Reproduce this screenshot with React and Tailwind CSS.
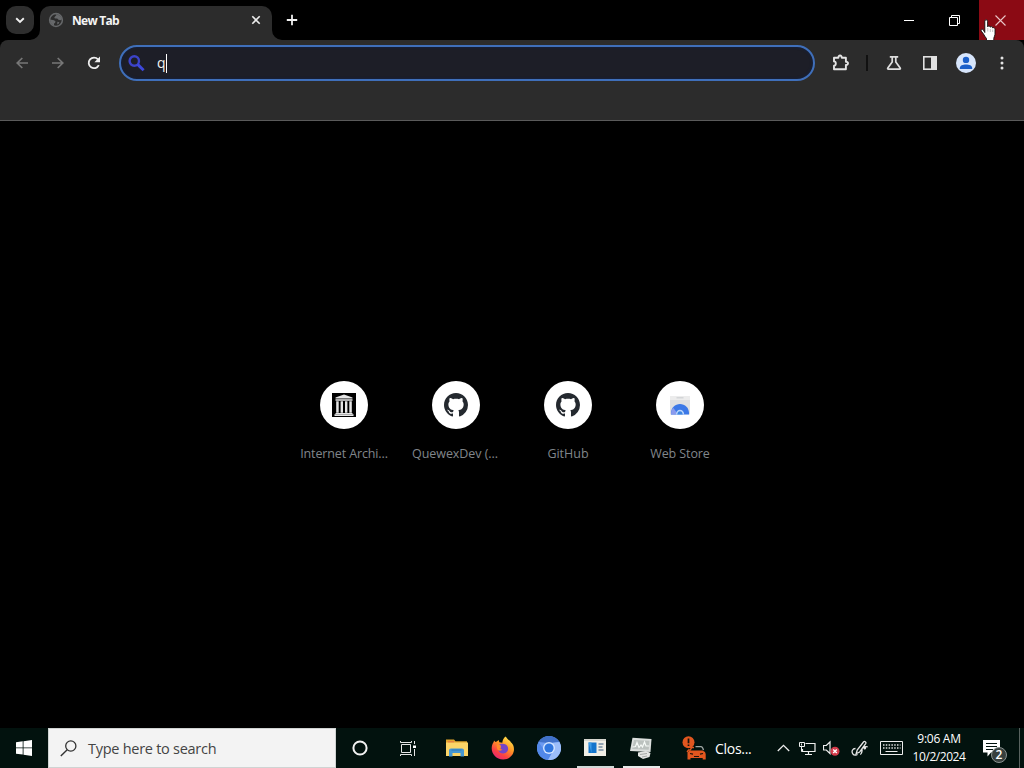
import React from 'react';

const Svg = ({ w, h, className = '', children, box }) => (
  <svg width={w} height={h} viewBox={box || `0 0 ${w} ${h}`} fill="none" className={`block shrink-0 ${className}`}>
    {children}
  </svg>
);

const Cell = ({ className = '', children }) => (
  <div className={`flex shrink-0 items-center justify-center ${className}`}>{children}</div>
);

const GlobeIcon = () => (
  <Svg w={16} h={16}>
    <circle cx="8" cy="8" r="6.4" stroke="#66686a" strokeWidth="1.500" />
    <path d="M2 7.600l4 .6 1.600 1.400-.6 1.400-1 .6v2C3.800 13 2 10.800 2 7.600zM7 2.200l1.500.8-1.500 1.400-.8 1.600 1.400.6 1.600-.2 1.200 1.400 2 .4 1.700-1C13.600 4.500 10.800 2 7 2.200zM9.400 9.800l2 .4-.8 1.600-1.400.6z" fill="#66686a" />
  </Svg>
);

function TabStrip() {
  return (
    <div className="flex h-10 items-stretch overflow-hidden bg-black">
      <div className="flex w-10 items-center pl-[6px]">
        <div className="flex h-7 w-7 items-center justify-center rounded-[10px] bg-[#2e2e2e]">
          <Svg w={10} h={7}><path d="M1.200 1.300L5 5l3.800-3.700" stroke="#f0f0f0" strokeWidth="1.900" /></Svg>
        </div>
      </div>
      <div className="relative mt-[6px] flex w-[232px] items-center rounded-t-[10px] bg-[#2c2c2c] pb-[6px] pl-2 pr-[11px]">
        <Svg w={10} h={10} className="absolute -left-[10px] bottom-0"><path d="M10 0v10H0A10 10 0 0 0 10 0z" fill="#2c2c2c" /></Svg>
        <Svg w={10} h={10} className="absolute -right-[10px] bottom-0"><path d="M0 0v10h10A10 10 0 0 1 0 0z" fill="#2c2c2c" /></Svg>
        <GlobeIcon />
        <span className="ml-2 flex-1 pt-px text-[12px] font-bold leading-4 tracking-[-0.720px] text-[#f4f4f4]">New Tab</span>
        <Svg w={10} h={10}><path d="M1.300 1.300l7.400 7.400M8.700 1.300L1.300 8.700" stroke="#ececec" strokeWidth="1.600" /></Svg>
      </div>
      <Cell className="w-10">
        <Svg w={12} h={12}><path d="M6 .8v10.400M.8 6h10.400" stroke="#f0f0f0" strokeWidth="1.800" /></Svg>
      </Cell>
      <div className="flex-1" />
      <Cell className="w-[46px]"><Svg w={10} h={10}><path d="M0 5.500h10" stroke="#fff" /></Svg></Cell>
      <Cell className="w-[47px] pr-[2px]">
        <Svg w={11} h={11}><path d="M.5 2.500h8v8h-8zM2.500 2.500v-2h8v8h-2" stroke="#fff" /></Svg>
      </Cell>
      <div className="relative flex w-[45px] items-center justify-center bg-[#8b0a14] pr-[2px]">
        <Svg w={11} h={11}><path d="M.5.5l10 10M10.500.5l-10 10" stroke="#e9c6c8" strokeWidth="1.100" /></Svg>
        <Svg w={17} h={22} className="absolute left-[1px] top-[19px]">
          <path d="M4.800 13.500V2.200C4.800.3 7.600.3 7.600 2.200v5.600c.5-1.300 2.500-1 2.600.4.700-1 2.400-.7 2.500.7.900-.7 2.300 0 2.300 1.400v5c0 1.700-1.200 2.600-1.200 4V23H6.500v-3.500c-1.200-1.300-2.200-3-3-4.500L1.200 12c-.8-1.500 1-2.400 2.100-1.200z" fill="#fff" stroke="#111" strokeWidth=".9" />
          <path d="M7.800 9v3.500M10.300 10v3M12.700 10.500V13" stroke="#999" strokeWidth=".6" />
        </Svg>
      </div>
    </div>
  );
}

function Toolbar() {
  return (
    <div className="bg-black">
      <div className="h-[81px] rounded-t-[8px] border-b border-[#5a5a5a] bg-[#2c2c2c]">
        <div className="flex h-[46px] items-center pl-1">
          <Cell className="w-9">
            <Svg w={12} h={12}><path d="M12 6H1.500M6.300 1L1.200 6l5.100 5" stroke="#777" strokeWidth="1.700" /></Svg>
          </Cell>
          <Cell className="w-9">
            <Svg w={12} h={12}><path d="M0 6h10.500M5.700 1l5.100 5-5.100 5" stroke="#777" strokeWidth="1.700" /></Svg>
          </Cell>
          <Cell className="w-9">
            <Svg w={14} h={14}><path d="M11.800 9.200A5.300 5.300 0 1 1 11 3.400" stroke="#eee" strokeWidth="1.800" /><path d="M13 .6v5.600H7.400z" fill="#eee" /></Svg>
          </Cell>
          <div className="ml-[7px] flex h-9 w-[696px] shrink-0 items-center rounded-full border-2 border-[#3f6fba] bg-[#1d1e27] pl-[7px] shadow-[inset_0_0_3px_#10224c]">
            <Svg w={17} h={17}>
              <circle cx="6.300" cy="6" r="4.700" stroke="#3c43c8" strokeWidth="2.400" />
              <path d="M9.600 9.400l6 5.800" stroke="#3d48dc" strokeWidth="2.900" />
            </Svg>
            <span className="ml-[12px] text-[14px] leading-5 text-[#f2f2f2]">q</span>
            <span className="h-[19px] w-px bg-white" />
          </div>
          <Cell className="ml-[7px] w-9">
            <Svg w={18} h={18} className="ml-px">
              <path d="M2 3.700h4.400c-.3-3 3.600-3 3.300 0h4.200v4c2.800-.1 2.800 3.300 0 3.200v4.400H2v-3.600c2.400 0 2.400-4.300 0-4.300z" stroke="#e4e4e4" strokeWidth="1.900" strokeLinejoin="round" />
            </Svg>
          </Cell>
          <Cell className="ml-[8px] w-[2px]"><div className="h-4 w-[2px] bg-[#111]" /></Cell>
          <Cell className="ml-2 w-9">
            <Svg w={16} h={16}><path d="M3.800 1.800h8.400M6.200 2v5L1.800 13.100c-.4.600-.1 1.100.6 1.100h11.200c.7 0 1-.5.6-1.100L9.800 7V2" stroke="#dedede" strokeWidth="1.700" /></Svg>
          </Cell>
          <Cell className="w-9">
            <Svg w={14} h={14}><rect x=".8" y=".8" width="12.400" height="12.400" stroke="#e2e2e2" strokeWidth="1.600" /><path d="M8 0h6v14H8z" fill="#e2e2e2" /></Svg>
          </Cell>
          <Cell className="w-9">
            <Svg w={20} h={20}><circle cx="10" cy="10" r="10" fill="#d7e5fb" /><circle cx="10" cy="6.900" r="3.200" fill="#1b5fc9" /><path d="M3.800 14.900c0-4.600 12.400-4.600 12.400 0v1H3.800z" fill="#1b5fc9" /></Svg>
          </Cell>
          <Cell className="w-9">
            <Svg w={4} h={14}><circle cx="2" cy="2" r="1.500" fill="#e4e4e4" /><circle cx="2" cy="7" r="1.500" fill="#e4e4e4" /><circle cx="2" cy="12" r="1.500" fill="#e4e4e4" /></Svg>
          </Cell>
        </div>
      </div>
    </div>
  );
}

const ArchiveLogo = () => (
  <Svg w={24} h={24}>
    <path d="M0 0h24v24H0z" fill="#000" />
    <path d="M12 1.500l8.500 3v1H3.500v-1zM3.500 6.200h17v1.500h-17zM4.200 8.300h2.500v11.400H4.200zM8.600 8.300h2.400v11.400H8.600zM13 8.300h2.400v11.400H13zM17.300 8.300h2.500v11.400h-2.500zM3.500 19.900h17V21h-17zM2.500 21.300h19V23h-19z" fill="#e6e6e6" />
  </Svg>
);

const GitHubLogo = () => (
  <Svg w={24} h={24} box="0 0 16 16">
    <path fill="#24292f" d="M8 0C3.580 0 0 3.580 0 8c0 3.540 2.290 6.530 5.470 7.590.4.070.55-.17.55-.38 0-.19-.01-.82-.01-1.490-2.010.37-2.530-.49-2.690-.94-.09-.23-.48-.94-.82-1.130-.28-.15-.68-.52-.01-.53.63-.01 1.080.58 1.230.82.72 1.210 1.870.87 2.330.66.07-.52.28-.87.51-1.070-1.780-.2-3.640-.89-3.640-3.950 0-.87.31-1.590.82-2.150-.08-.2-.36-1.020.08-2.120 0 0 .67-.21 2.200.82.64-.18 1.320-.27 2-.27s1.360.09 2 .27c1.530-1.040 2.200-.82 2.200-.82.44 1.100.16 1.920.08 2.120.51.56.82 1.270.82 2.150 0 3.070-1.870 3.750-3.650 3.950.29.25.54.73.54 1.480 0 1.070-.01 1.930-.01 2.200 0 .21.15.46.55.38A8.010 8.010 0 0 0 16 8c0-4.420-3.580-8-8-8z" />
  </Svg>
);

const WebStoreLogo = () => (
  <Svg w={22} h={22}>
    <path d="M1 2h20v18.500H1z" fill="#dfe0e2" />
    <path d="M1 2h20v4H1z" fill="#ececec" />
    <path d="M7.500 3.800h7" stroke="#cfd1d4" strokeWidth="1.200" />
    <path d="M2 20.500C1 6.500 21 6.500 20 20.500z" fill="#3b78e7" />
    <path d="M2 20.500c0-3 .8-5.300 2.200-6.800L7 17.500v3z" fill="#8b9bee" />
    <path d="M6.800 20.500c0-6.500 8.400-6.500 8.400 0z" fill="#b9d4fb" />
    <path d="M8.300 20.500c0-4.500 5.400-4.500 5.400 0z" fill="#3c86e2" />
  </Svg>
);

const SHORTCUTS = [
  { label: 'Internet Archi...', logo: <ArchiveLogo />, track: 'tracking-[-0.130px]' },
  { label: 'QuewexDev (...', logo: <GitHubLogo />, track: 'tracking-[-0.060px] pr-[2px]' },
  { label: 'GitHub', logo: <GitHubLogo />, track: 'tracking-[0px]' },
  { label: 'Web Store', logo: <WebStoreLogo />, track: 'tracking-[-0.100px]' },
];

function NewTabPage() {
  return (
    <main className="flex flex-1 justify-center bg-black pt-[260px]">
      {SHORTCUTS.map((s) => (
        <div key={s.label} className="flex w-28 flex-col items-center">
          <div className="flex h-12 w-12 items-center justify-center rounded-full bg-white">{s.logo}</div>
          <span className={`mt-4 whitespace-nowrap text-[12.500px] leading-[18px] text-[#80868b] ${s.track}`}>{s.label}</span>
        </div>
      ))}
    </main>
  );
}

const FirefoxLogo = () => (
  <Svg w={24} h={24}>
    <defs>
      <linearGradient id="ff" x1="18" y1="2" x2="5" y2="22" gradientUnits="userSpaceOnUse">
        <stop offset="0" stopColor="#ffe04a" /><stop offset=".4" stopColor="#ff9425" /><stop offset=".75" stopColor="#fb4044" /><stop offset="1" stopColor="#e82873" />
      </linearGradient>
    </defs>
    <path d="M14.500.5c1 1 2 2.700 4.500 4.500.3.300.6.800.8 1.300.8.500 1.800 1.600 2.300 2.800 3 7-2 14.400-9.900 14.400C5.200 23.500.5 18 .7 12c.1-2.700 1-4.700 2-5.900l.3-1.600 1.500 1.600 1.200-.5 2-1.600.6 2.300 3 .5c.2-2.500 1.300-4.700 3.200-6.300z" fill="url(#ff)" />
    <path d="M7 9.500c2.500-2.500 8.500-2.400 9.800 1.500 1.200 3.700-1.300 6.400-4.600 6.400-2.500 0-4.500-1.600-5-3.500 1.500 1 3.200.8 4.300-.3-1.700-.2-2.300-1-1.700-2.100.4-.7-1.200-1.200-2.800-2z" fill="#7545c7" />
    <path d="M5.500 8.500c2-.7 3.500.3 4.500 1.300l-.5 2c-2 .3-1 2 1.500 2.300-2 1-4 .4-4.800-1.100z" fill="#ff8b2a" />
  </Svg>
);

const TASK_ICONS = {
  cortana: <Svg w={16} h={16}><circle cx="8" cy="8" r="6.600" stroke="#f2f2f2" strokeWidth="2" /></Svg>,
  taskView: (
    <Svg w={17} h={15}>
      <path d="M1.500 3.500h9v8h-9zM.5 0v1.500h11V0M.5 15v-1.500h11V15M14.500 0v3M14.500 8v7" stroke="#e6e6e6" />
      <path d="M13 4.500h3v2.500h-3z" fill="#fff" />
    </Svg>
  ),
  explorer: (
    <Svg w={22} h={20}>
      <path d="M0 1.500h8l1.500 1.800H21V6H0z" fill="#e2a62d" /><path d="M0 4.500h22V18H0z" fill="#fbd568" /><path d="M2 3.300h6v1H2z" fill="#e8704b" />
      <path d="M3 18.500v-6c0-1.200.8-2 2-2h11c1.200 0 2 .8 2 2v6h-3.500V15h-8v3.500z" fill="#4597d3" />
      <path d="M5.500 12h10" stroke="#2f79b8" strokeWidth="1" />
    </Svg>
  ),
  chromium: (
    <Svg w={24} h={24}>
      <circle cx="12" cy="12" r="12" fill="#6d9bf1" />
      <path d="M1.600 6A12 12 0 0 1 22.400 6L12 7z" fill="#4071c9" />
      <path d="M1.600 6A12 12 0 0 0 11 24l5-9-8.500-.5z" fill="#5288e8" />
      <path d="M22.400 6A12 12 0 0 1 11 24l5.500-9.500L15 7z" fill="#9bbdfa" />
      <circle cx="12" cy="12" r="6" fill="#d3e4ff" /><circle cx="12" cy="12" r="4.600" fill="#2f76df" />
    </Svg>
  ),
  panel: (
    <Svg w={22} h={17}>
      <path d="M0 0h22v17H0z" fill="#f1efe6" /><path d="M0 0h22v2H0z" fill="#d6d6cf" />
      <path d="M4.500 3.500h8v10.500h-8z" fill="#1475cc" /><path d="M4.500 3.500h3V14z" fill="#3d9be5" />
      <path d="M14.500 5h5M14.500 8h4M14.500 11h5" stroke="#748ca3" strokeWidth="1.300" />
    </Svg>
  ),
  monitor: (
    <Svg w={24} h={22}>
      <path d="M3.500.8L22.500 2l-1 13L1 14z" fill="#dcdfdd" /><path d="M5 3l15.500.8-.8 9-16.500-.8z" fill="#bcc2bf" />
      <path d="M3.500 10l3-.5 1.500-4 2 5 2-2.500 1.500 2 2-5 1.500 4h3" stroke="#f6faf7" strokeWidth="1.200" />
      <path d="M9 15.500l8-1.500 4.500 2-1 4-6.500 2-5-3z" fill="#e5e5e3" /><path d="M11 17.500l7-1M13 20l5-1" stroke="#a5a8a6" />
    </Svg>
  ),
};

const TrafficIcon = () => (
  <Svg w={25} h={25}>
    <circle cx="6.500" cy="6.200" r="6" fill="#e1561f" />
    <path d="M6.500 2.500v4.700M6.500 8.500v1.600" stroke="#17120d" strokeWidth="1.700" />
    <path d="M13.500 10.700h5.500c1.500 0 2 1.500 2.500 3.500" stroke="#9fa6a4" strokeWidth="1.300" />
    <path d="M8 11.500h4M5 16l1.500-2h1.700l2-3.200" stroke="#e1561f" strokeWidth="1.300" />
    <path d="M5.500 16.500l2-2h13l2.500 1.500.7 2v5.500h-3V22H8.500v1.500h-3z" fill="#e1561f" />
    <path d="M8 17.500l3 .7M21 17.500l-3 .7M12 20.500h5" stroke="#1c130c" strokeWidth="1.200" />
  </Svg>
);

function Taskbar() {
  return (
    <footer className="flex h-10 bg-[#02120e] text-white">
      <Cell className="w-12">
        <Svg w={16} h={16}><path d="M0 2.300L6.700 1.300v6.200H0zM7.500 1.200L16 0v7.500H7.500zM0 8.300h6.700v6.300L0 13.700zM7.500 8.300H16V16l-8.500-1.200z" fill="#fff" /></Svg>
      </Cell>
      <div className="flex w-[288px] items-center border border-[#cfd3d2] bg-[#f3f3f3] pl-[11px]">
        <Svg w={17} h={17}><circle cx="10.800" cy="6" r="5.100" stroke="#333" strokeWidth="1.300" /><path d="M7.200 9.700L.8 16" stroke="#333" strokeWidth="1.400" /></Svg>
        <span className="ml-[11px] whitespace-nowrap pt-px text-[14.500px] leading-5 tracking-[-0.270px] text-[#444]">Type here to search</span>
      </div>
      <Cell className="w-12">{TASK_ICONS.cortana}</Cell>
      <Cell className="w-12">{TASK_ICONS.taskView}</Cell>
      <Cell className="ml-[2px] w-[46px]">{TASK_ICONS.explorer}</Cell>
      <Cell className="w-[46px]"><FirefoxLogo /></Cell>
      <Cell className="w-[46px]">{TASK_ICONS.chromium}</Cell>
      <div className="flex w-[46px] flex-col items-center"><Cell className="h-[38px]">{TASK_ICONS.panel}</Cell><div className="h-[2px] w-[37px] bg-[#cfd9d7]" /></div>
      <div className="flex w-[46px] flex-col items-center"><Cell className="h-[38px] pt-[2px]">{TASK_ICONS.monitor}</Cell><div className="h-[2px] w-[37px] bg-[#e6eae9]" /></div>
      <div className="ml-[18px] flex w-[91px] items-center">
        <TrafficIcon />
        <span className="ml-[8px] pt-px text-[14px] leading-5 tracking-[-0.280px]">Clos...</span>
      </div>
      <Cell className="w-5">
        <Svg w={13} h={8}><path d="M.8 7l5.700-5.700L12.200 7" stroke="#eee" strokeWidth="1.300" /></Svg>
      </Cell>
      <Cell className="ml-1 w-5">
        <Svg w={17} h={15}><path d="M6.500 2.500h9.500v8H3.500V8M9.500 10.500v3M6 13.500h7" stroke="#eee" strokeWidth="1.200" /><path d="M.5 1.500h5v4h-5zM2.500 5.500v5H5M2.500 2.500v2" stroke="#eee" /></Svg>
      </Cell>
      <Cell className="ml-[6px] w-[18px]">
        <Svg w={18} h={16}><path d="M.5 5.500h2.800l3.700-3.500v11.500l-3.700-3.500H.5z" stroke="#eee" strokeWidth="1.200" /><circle cx="12" cy="11.300" r="4.500" fill="#d33a4a" /><path d="M10.200 9.500l3.600 3.600m0-3.600l-3.600 3.600" stroke="#fff" strokeWidth="1.400" /></Svg>
      </Cell>
      <Cell className="ml-[9px] w-[20px]">
        <Svg w={18} h={17}>
          <path d="M5.200 13.500L6.200 10l6.300-8c1-1.300 3 .1 2.200 1.600L8.700 12zM4.500 8.500C1.500 8.500.2 11.500 1.800 13.800c1.200 1.700 3.700 1.800 4.700.6M11.200 9.500c-.2 2.500-.5 4.300-2 5M11.500 7.500c1.500-1.200 3.200-.8 3 .6-.2 1.200-1.800 1-1.300-.5.600-1.300 2.600-1.200 3.500-.6" stroke="#e6e6e6" strokeWidth="1.300" />
        </Svg>
      </Cell>
      <Cell className="ml-[9px] w-[24px]">
        <Svg w={23} h={14}><path d="M.5.5h22v13H.5z" stroke="#eee" /><path d="M3 4h17.500M3 7h17.500" stroke="#ddd" strokeWidth="1.400" strokeDasharray="1.500 1.300" /><path d="M5.500 10.500h12" stroke="#eee" /></Svg>
      </Cell>
      <div className="ml-[6px] flex w-[60px] flex-col items-center justify-center pb-px text-[12px] leading-[18px]">
        <span className="whitespace-nowrap tracking-[-0.260px]">9:06 AM</span>
        <span className="whitespace-nowrap tracking-[-0.450px]">10/2/2024</span>
      </div>
      <div className="relative ml-[14px] flex w-[36px] items-center">
        <Svg w={17} h={17}><path d="M0 0h17v12.500H8l-3.500 4v-4H0z" fill="#fff" /><path d="M3 3.500h11M3 6.500h11M3 9.500h7" stroke="#02120e" strokeWidth="1.200" /></Svg>
        <div className="absolute left-[8px] top-[19px] flex h-[16px] w-[16px] items-center justify-center rounded-full border border-[#8b9391] bg-[#38403e] text-[12px] font-semibold leading-none">2</div>
      </div>
      <div className="w-px bg-[#59625f]" />
    </footer>
  );
}

export default function App() {
  return (
    <div className="flex h-[768px] w-[1024px] flex-col overflow-hidden bg-black font-['Open_Sans','Noto_Sans',sans-serif]">
      <TabStrip />
      <Toolbar />
      <NewTabPage />
      <Taskbar />
    </div>
  );
}
